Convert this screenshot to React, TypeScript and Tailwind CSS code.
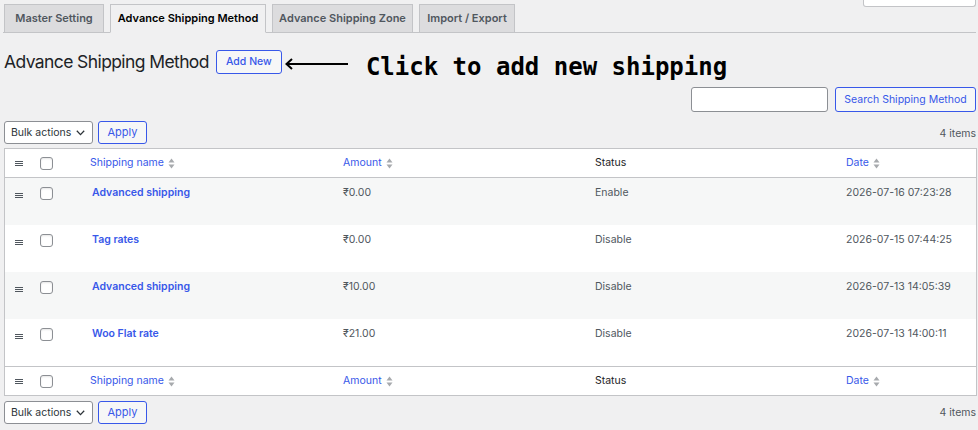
import * as React from "react";

const rows = [
  { name: "Advanced shipping", amount: "₹0.00", status: "Enable", date: "2026-07-16 07:23:28" },
  { name: "Tag rates", amount: "₹0.00", status: "Disable", date: "2026-07-15 07:44:25" },
  { name: "Advanced shipping", amount: "₹10.00", status: "Disable", date: "2026-07-13 14:05:39" },
  { name: "Woo Flat rate", amount: "₹21.00", status: "Disable", date: "2026-07-13 14:00:11" },
];

const cols = "grid grid-cols-[26px_49px_253px_252px_251px_1fr]";

function Handle() {
  return (
    <span className="flex w-[8px] flex-col gap-[1px]">
      <span className="h-[1px] bg-[#50575e]" />
      <span className="h-[1px] bg-[#50575e]" />
      <span className="h-[1px] bg-[#50575e]" />
    </span>
  );
}

function Check() {
  return (
    <span className="block h-[13px] w-[13px] rounded-[3px] border border-[#8c8f94] bg-white shadow-[inset_0_1px_2px_rgba(0,0,0,0.1)]" />
  );
}

function Sort() {
  return (
    <svg width="7" height="11" viewBox="0 0 7 11" className="ml-[4px]">
      <path d="M3.5 0.5 L6.5 4.5 L0.5 4.5 Z" fill="#a7aaad" />
      <path d="M3.5 10.5 L6.5 6.5 L0.5 6.5 Z" fill="#a7aaad" />
    </svg>
  );
}

function HeadRow({ top }: { top?: boolean }) {
  return (
    <div
      className={`${cols} h-[29px] items-center bg-white ${top ? "border-b" : "border-t"} border-[#c3c4c7]`}
    >
      <div className="flex justify-center pl-[1px]">
        <Handle />
      </div>
      <div className="pl-[9px]">
        <Check />
      </div>
      <div className="flex items-center pl-[10px] text-[#3858e9]">
        Shipping name
        <Sort />
      </div>
      <div className="flex items-center pl-[10px] text-[#3858e9]">
        Amount
        <Sort />
      </div>
      <div className="pl-[10px] text-[#1d2327]">Status</div>
      <div className="flex items-center pl-[10px] text-[#3858e9]">
        Date
        <Sort />
      </div>
    </div>
  );
}

function Bulk() {
  return (
    <div className="flex items-center gap-[5px]">
      <div className="flex h-[23px] w-[89px] items-center justify-between whitespace-nowrap rounded-[3px] border border-[#8c8f94] bg-white pl-[6px] pr-[7px] text-[10.5px] text-[#2c3338]">
        Bulk actions
        <svg width="9" height="6" viewBox="0 0 9 6">
          <path d="M0.8 0.8 L4.5 4.6 L8.2 0.8" fill="none" stroke="#2c3338" strokeWidth="1.3" />
        </svg>
      </div>
      <div className="flex h-[23px] w-[49px] items-center justify-center rounded-[3px] border border-[#3858e9] bg-[#f6f7f7] text-[11px] text-[#3858e9]">
        Apply
      </div>
    </div>
  );
}

export default function App() {
  return (
    <div
      className="h-[430px] w-[978px] overflow-hidden bg-[#f0f0f1] text-[10.5px] text-[#50575e]"
      style={{ fontFamily: "Inter, 'Noto Sans', sans-serif" }}
    >
      {/* tabs */}
      <div className="ml-[3px] mr-[2px] flex h-[33px] items-end border-b border-[#c3c4c7]">
        <div className="flex items-end gap-[6px] pl-[1px]">
          <div className="mb-[-1px] flex h-[29px] w-[100px] items-center justify-center border border-[#c3c4c7] bg-[#dcdcde] text-[11px] font-semibold text-[#50575e]">
            Master Setting
          </div>
          <div className="mb-[-1px] flex h-[29px] w-[156px] items-center justify-center border border-b-[#f0f0f1] border-[#c3c4c7] bg-[#f0f0f1] text-[11px] font-semibold text-[#000]">
            Advance Shipping Method
          </div>
          <div className="mb-[-1px] flex h-[29px] w-[141px] items-center justify-center border border-[#c3c4c7] bg-[#dcdcde] text-[11px] font-semibold text-[#50575e]">
            Advance Shipping Zone
          </div>
          <div className="mb-[-1px] flex h-[29px] w-[96px] items-center justify-center border border-[#c3c4c7] bg-[#dcdcde] text-[11px] font-semibold text-[#50575e]">
            Import / Export
          </div>
        </div>
        <div className="mb-auto ml-auto h-[7px] w-[113px] rounded-b-[3px] border-x border-b border-[#c3c4c7] bg-white" />
      </div>

      {/* heading */}
      <div className="mt-[17px] flex h-[24px] items-center pl-[4px]">
        <h1 className="text-[17.5px] font-normal tracking-[-0.6px] text-[#1d2327]">Advance Shipping Method</h1>
        <div className="ml-[7px] flex h-[24px] w-[66px] items-center justify-center rounded-[3px] border border-[#3858e9] bg-[#f6f7f7] text-[10.5px] font-medium text-[#3858e9]">
          Add New
        </div>
        <svg width="64" height="12" viewBox="0 0 64 12" className="ml-[3px] mt-[3px]">
          <path d="M2 6 H63" stroke="#000" strokeWidth="2" />
          <path d="M7 1 L1.5 6 L7 11" fill="none" stroke="#000" strokeWidth="2" />
        </svg>
        <span
          className="ml-[17px] mt-[9px] text-[24px] font-bold text-black"
          style={{ fontFamily: "'DejaVu Sans Mono', 'Liberation Mono', monospace" }}
        >
          Click to add new shipping
        </span>
      </div>

      {/* search */}
      <div className="mt-[13px] flex justify-end gap-[7px] pr-[2px]">
        <div className="h-[25px] w-[137px] rounded-[3px] border border-[#8c8f94] bg-white" />
        <div className="flex h-[25px] w-[141px] items-center justify-center rounded-[3px] border border-[#3858e9] bg-[#f6f7f7] text-[10.5px] text-[#3858e9]">
          Search Shipping Method
        </div>
      </div>

      {/* top nav */}
      <div className="mt-[9px] flex items-center justify-between pl-[4px] pr-[2px]">
        <Bulk />
        <span className="pt-[3px] text-[10.5px] text-[#50575e]">4 items</span>
      </div>

      {/* table */}
      <div className="ml-[4px] mr-[1px] mt-[4px] border border-[#c3c4c7] bg-white">
        <HeadRow top />
        {rows.map((r, i) => (
          <div
            key={i}
            className={`${cols} h-[47px] items-start ${i % 2 === 0 ? "bg-[#f6f7f7]" : "bg-white"}`}
          >
            <div className="flex justify-center pl-[1px] pt-[15px]">
              <Handle />
            </div>
            <div className="pl-[9px] pt-[9px]">
              <Check />
            </div>
            <div className="pl-[12px] pt-[8px] font-semibold leading-[14px] text-[#3858e9]">{r.name}</div>
            <div className="pl-[10px] pt-[8px] leading-[14px]">{r.amount}</div>
            <div className="pl-[10px] pt-[8px] leading-[14px]">{r.status}</div>
            <div className="pl-[10px] pt-[8px] leading-[14px]">{r.date}</div>
          </div>
        ))}
        <HeadRow />
      </div>

      {/* bottom nav */}
      <div className="mt-[5px] flex items-center justify-between pl-[4px] pr-[2px]">
        <Bulk />
        <span className="text-[10.5px] text-[#50575e]">4 items</span>
      </div>
    </div>
  );
}
